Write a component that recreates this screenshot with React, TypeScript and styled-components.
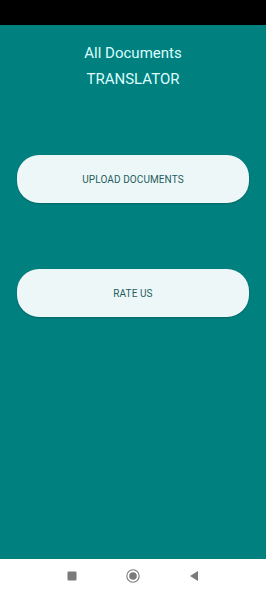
import React from "react";
import styled, { createGlobalStyle } from "styled-components";

const GlobalStyle = createGlobalStyle`
  html, body {
    margin: 0;
    padding: 0;
    background: #000;
  }
  body {
    font-family: Roboto, "Liberation Sans", sans-serif;
  }
`;

const Screen = styled.div`
  width: 266px;
  height: 592px;
  display: flex;
  flex-direction: column;
  overflow: hidden;
`;

const StatusBar = styled.div`
  height: 25px;
  background: #000;
  flex-shrink: 0;
`;

const Main = styled.main`
  flex: 1;
  background: #00807f;
  display: flex;
  flex-direction: column;
  align-items: center;
  padding: 15px 17px 0;
`;

const Title = styled.h1`
  margin: 0;
  font-weight: 400;
  font-size: 15px;
  line-height: 26px;
  color: #dcfdfd;
  text-align: center;
`;

const Actions = styled.div`
  align-self: stretch;
  display: flex;
  flex-direction: column;
  gap: 66px;
  margin-top: 63px;
`;

const ActionButton = styled.button`
  height: 48px;
  border: none;
  border-radius: 22px;
  background: #eef7f7;
  color: #1e5e62;
  font-family: Roboto, "Liberation Sans", sans-serif;
  font-size: 10px;
  letter-spacing: 0.1px;
  text-transform: uppercase;
  box-shadow: 0 1px 2px rgba(0, 0, 0, 0.2);
  cursor: pointer;
`;

const NavBar = styled.nav`
  height: 33px;
  flex-shrink: 0;
  background: #fff;
  display: flex;
  align-items: center;
  justify-content: center;
  gap: 47px;
`;

const NavIcon = styled.svg`
  width: 14px;
  height: 14px;
`;

export default function App() {
  return (
    <>
      <GlobalStyle />
      <Screen>
        <StatusBar />
        <Main>
          <Title>All Documents</Title>
          <Title>TRANSLATOR</Title>
          <Actions>
            <ActionButton>Upload Documents</ActionButton>
            <ActionButton>Rate Us</ActionButton>
          </Actions>
        </Main>
        <NavBar>
          <NavIcon viewBox="0 0 14 14">
            <rect x="2.5" y="2.5" width="9" height="9" rx="1" fill="#7a7a7a" />
          </NavIcon>
          <NavIcon viewBox="0 0 14 14">
            <circle cx="7" cy="7" r="6.2" fill="none" stroke="#7a7a7a" strokeWidth="1.1" />
            <circle cx="7" cy="7" r="3.8" fill="#7a7a7a" />
          </NavIcon>
          <NavIcon viewBox="0 0 14 14">
            <path d="M11 2 L3 7 L11 12 Z" fill="#7a7a7a" />
          </NavIcon>
        </NavBar>
      </Screen>
    </>
  );
}
